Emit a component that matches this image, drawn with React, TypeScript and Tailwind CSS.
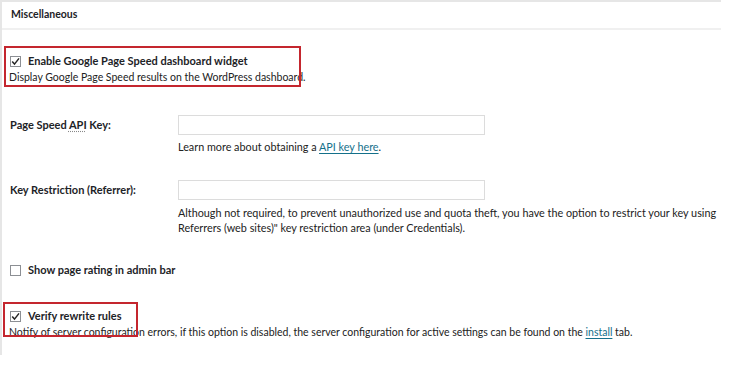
import React from 'react';

const Checkbox: React.FC<{ checked?: boolean }> = ({ checked }) => (
    <span className="relative inline-flex w-[11px] h-[11px] border border-[#8c8f94] bg-white shrink-0">
        {checked && (
            <svg viewBox="0 0 11 11" className="absolute -left-px -top-px w-[11px] h-[11px]">
                <path d="M2.2 5.5 L4.5 8.1 L9 2.4" fill="none" stroke="#262626" strokeWidth="1.5" />
            </svg>
        )}
    </span>
);

const App: React.FC = () => {
    return (
        <div className="w-[730px] h-[376px] bg-white text-[#222] font-['Lato',sans-serif] text-[10.5px]">
            <div className="w-[721px] h-[355px] border-l-2 border-t-2 border-[#e6e6e6]">
                {/* section header */}
                <div className="h-[28px] border-b-2 border-[#f0f0f0] pl-[9px] flex items-center">
                    <h2 className="font-bold text-[#1d2327]">Miscellaneous</h2>
                </div>

                {/* page speed widget */}
                <div className="relative mt-[23px] pl-[8px]">
                    <label className="h-[16px] flex items-center gap-[7px] font-bold text-[11px] text-[#1d2327]">
                        <Checkbox checked />
                        <span>Enable Google Page Speed dashboard widget</span>
                    </label>
                    <p className="h-[16px] leading-[16px] -ml-px">Display Google Page Speed results on the WordPress dashboard.</p>
                    <div className="absolute left-[2px] -top-[7px] w-[297px] h-[41px] border-2 border-[#c4262e] pointer-events-none" />
                </div>

                {/* API key */}
                <div className="mt-[30px] flex pl-[8px]">
                    <div className="w-[168px] shrink-0 h-[20px] flex items-center font-bold text-[11px] text-[#1d2327]">
                        <span>
                            Page Speed <abbr className="underline decoration-dotted decoration-[#888] underline-offset-2">API</abbr> Key:
                        </span>
                    </div>
                    <div className="text-[10.8px]">
                        <input type="text" className="block w-[307px] h-[20px] border border-[#dcdcdc] bg-white" />
                        <p className="mt-[4px] h-[16px] leading-[16px]">
                            Learn more about obtaining a{' '}
                            <a href="#" className="text-[#14708a] underline underline-offset-2">API key here</a>.
                        </p>
                    </div>
                </div>

                {/* key restriction */}
                <div className="mt-[25px] flex pl-[8px]">
                    <div className="w-[168px] shrink-0 h-[20px] flex items-center font-bold text-[11px] text-[#1d2327]">
                        Key Restriction (Referrer):
                    </div>
                    <div className="text-[10.8px]">
                        <input type="text" className="block w-[307px] h-[20px] border border-[#dcdcdc] bg-white" />
                        <p className="mt-[5px] w-[543px] leading-[15px]">
                            Although not required, to prevent unauthorized use and quota theft, you have the option to restrict your key using
                            Referrers (web sites)" key restriction area (under Credentials).
                        </p>
                    </div>
                </div>

                {/* admin bar */}
                <label className="mt-[27px] pl-[8px] h-[16px] flex items-center gap-[7px] font-bold text-[11px] text-[#1d2327]">
                    <Checkbox />
                    <span>Show page rating in admin bar</span>
                </label>

                {/* rewrite rules */}
                <div className="relative mt-[30px] pl-[8px]">
                    <label className="h-[16px] flex items-center gap-[7px] font-bold text-[11px] text-[#1d2327]">
                        <Checkbox checked />
                        <span>Verify rewrite rules</span>
                    </label>
                    <p className="h-[16px] leading-[16px] -ml-px">
                        Notify of server configuration errors, if this option is disabled, the server configuration for active settings can be found on the{' '}
                        <a href="#" className="text-[#14708a] underline underline-offset-2">install</a> tab.
                    </p>
                    <div className="absolute left-px -top-[6px] w-[135px] h-[35px] border-2 border-[#c4262e] pointer-events-none" />
                </div>
            </div>
        </div>
    );
};

export default App;
